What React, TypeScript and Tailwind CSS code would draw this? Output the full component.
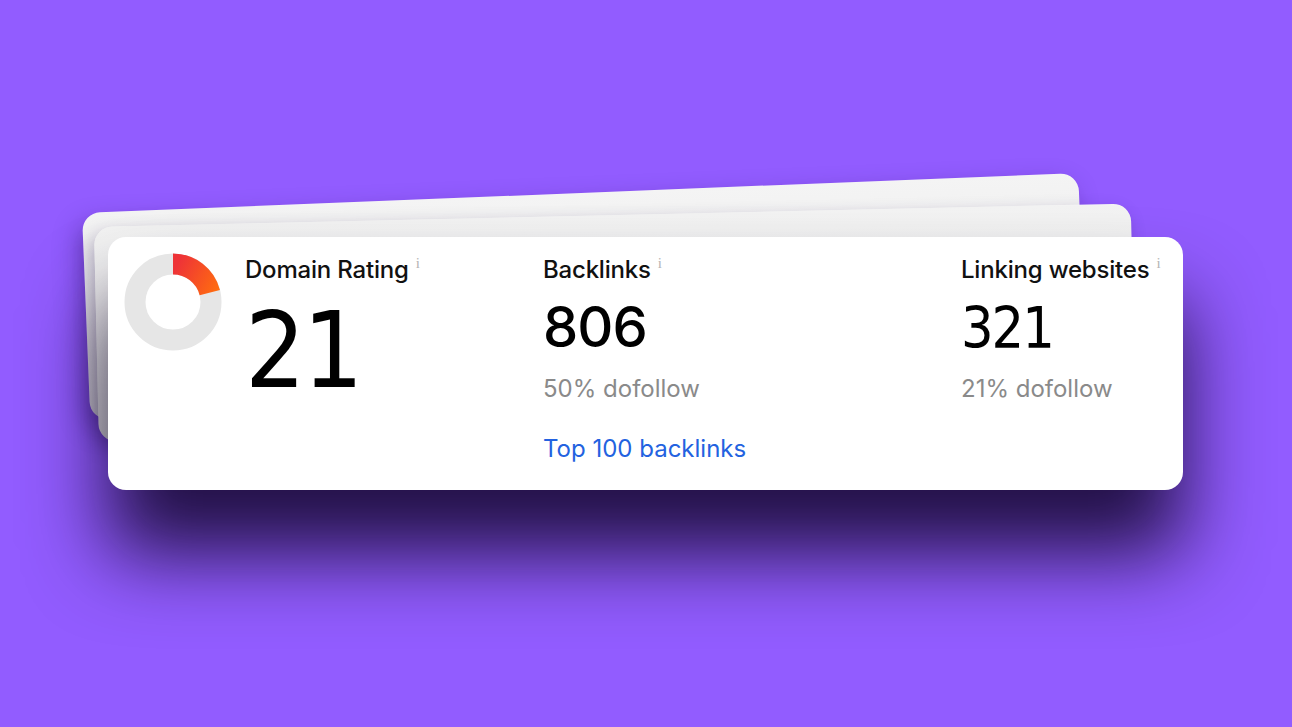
import React from "react";

const sans = "font-['Inter','Liberation_Sans',sans-serif]";
const grotesk = "font-['DejaVu_Sans_Condensed','DejaVu_Sans',sans-serif]";

function Info() {
  return (
    <span className="ml-[7px] translate-y-[1px] font-['Liberation_Serif',serif] text-[15px] leading-none text-[#b5b5b5]">
      i
    </span>
  );
}

function Donut({ value }: { value: number }) {
  const r = 38;
  const a = (value / 100) * 2 * Math.PI;
  const ex = 49 + r * Math.sin(a);
  const ey = 49 - r * Math.cos(a);
  return (
    <svg width="98" height="98" viewBox="0 0 98 98" className="shrink-0">
      <defs>
        <linearGradient id="dr" gradientUnits="userSpaceOnUse" x1="50" y1="18" x2="92" y2="40">
          <stop offset="0%" stopColor="#ee3337" />
          <stop offset="100%" stopColor="#ff6c10" />
        </linearGradient>
      </defs>
      <circle cx="49" cy="49" r={r} fill="none" stroke="#e6e6e6" strokeWidth="21" />
      <path
        d={`M49 ${49 - r} A${r} ${r} 0 0 1 ${ex} ${ey}`}
        fill="none"
        stroke="url(#dr)"
        strokeWidth="21"
      />
    </svg>
  );
}

export default function App() {
  return (
    <div className={`h-[727px] w-full overflow-hidden bg-[#925cff] pl-[108px] pt-[237px] ${sans}`}>
      <div className="relative h-[253px] w-[1075px]">
        {/* stacked sheets behind */}
        <div className="absolute left-[-26px] top-[-24px] h-[207px] w-[997px] origin-top-left -rotate-[2.3deg] rounded-[18px] bg-gradient-to-b from-[#f4f4f4] via-[#ededed] to-[#dedede] shadow-[-6px_10px_24px_rgba(40,15,90,0.35)]" />
        <div className="absolute left-[-14px] top-[-10px] h-[215px] w-[1037px] origin-top-left -rotate-[1.3deg] rounded-[18px] bg-gradient-to-b from-[#f3f3f3] via-[#ececec] to-[#dcdcdc] shadow-[-4px_8px_18px_rgba(40,15,90,0.3)]" />

        <div className="relative z-10 flex h-full w-full rounded-[18px] bg-white shadow-[0_64px_80px_rgba(14,4,36,0.85)]">
          <div className="pl-4 pt-4">
            <Donut value={21} />
          </div>

          <div className="ml-[23px] w-[298px] pt-[18px]">
            <div className="flex items-start text-[24px] font-medium leading-[30px] tracking-[-0.2px] text-[#111]">
              Domain Rating
              <Info />
            </div>
            <div className={`mt-[11px] text-[106px] leading-[110px] tracking-[-3px] text-black ${grotesk}`}>21</div>
          </div>

          <div className="w-[418px] pt-[18px]">
            <div className="flex items-start text-[24px] font-medium leading-[30px] tracking-[-0.2px] text-[#111]">
              Backlinks
              <Info />
            </div>
            <div className="mt-[12px] text-[56px] font-medium leading-[60px] tracking-[-1px] text-black">806</div>
            <div className="mt-[16px] text-[24px] leading-[32px] text-[#8a8a8a]">50% dofollow</div>
            <a href="#" className="mt-[28px] block text-[24px] leading-[32px] text-[#2362e0]">
              Top 100 backlinks
            </a>
          </div>

          <div className="pt-[18px]">
            <div className="flex items-start text-[24px] font-medium leading-[30px] tracking-[-0.2px] text-[#111]">
              Linking websites
              <Info />
            </div>
            <div className={`mt-[13px] text-[57px] leading-[60px] tracking-[-2px] text-black ${grotesk}`}>321</div>
            <div className="mt-[15px] text-[24px] leading-[32px] text-[#8a8a8a]">21% dofollow</div>
          </div>
        </div>
      </div>
    </div>
  );
}
